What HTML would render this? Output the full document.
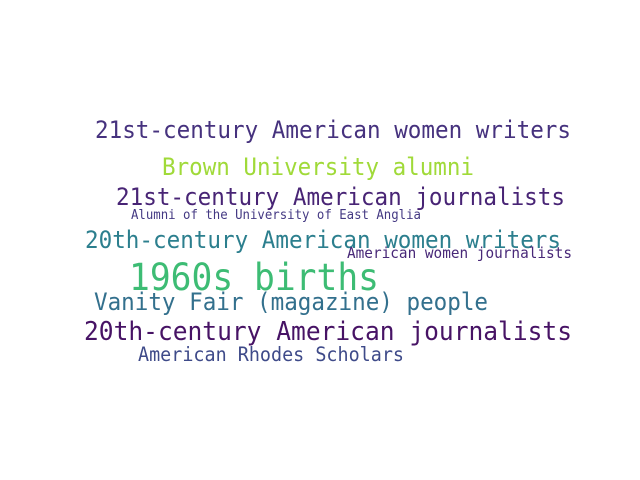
<!DOCTYPE html>
<html><head><meta charset="utf-8"><style>
html,body{margin:0;padding:0;background:#fff;width:640px;height:480px;overflow:hidden}
text{font-family:"DejaVu Sans Mono",monospace}
</style></head><body>
<svg width="640" height="480" xmlns="http://www.w3.org/2000/svg">
<rect width="640" height="480" fill="#fff"/>
<text x="95" y="138" font-size="24" fill="#46327e" textLength="476" lengthAdjust="spacingAndGlyphs">21st-century American women writers</text>
<text x="162" y="175" font-size="24" fill="#a0da39" textLength="312" lengthAdjust="spacingAndGlyphs">Brown University alumni</text>
<text x="116" y="205" font-size="24" fill="#482475" textLength="449" lengthAdjust="spacingAndGlyphs">21st-century American journalists</text>
<text x="131" y="219" font-size="13.2" fill="#443983" textLength="290" lengthAdjust="spacingAndGlyphs">Alumni of the University of East Anglia</text>
<text x="85" y="248" font-size="24" fill="#2c7f8e" textLength="476" lengthAdjust="spacingAndGlyphs">20th-century American women writers</text>
<text x="347" y="258" font-size="15.3" fill="#482878" textLength="225" lengthAdjust="spacingAndGlyphs">American women journalists</text>
<text x="129" y="290" font-size="37" fill="#3dbc74" textLength="250" lengthAdjust="spacingAndGlyphs">1960s births</text>
<text x="94" y="310" font-size="24" fill="#33708d" textLength="394" lengthAdjust="spacingAndGlyphs">Vanity Fair (magazine) people</text>
<text x="84" y="340" font-size="26" fill="#471365" textLength="488" lengthAdjust="spacingAndGlyphs">20th-century American journalists</text>
<text x="138" y="361" font-size="19.6" fill="#3e4a89" textLength="266" lengthAdjust="spacingAndGlyphs">American Rhodes Scholars</text>
</svg>
</body></html>
